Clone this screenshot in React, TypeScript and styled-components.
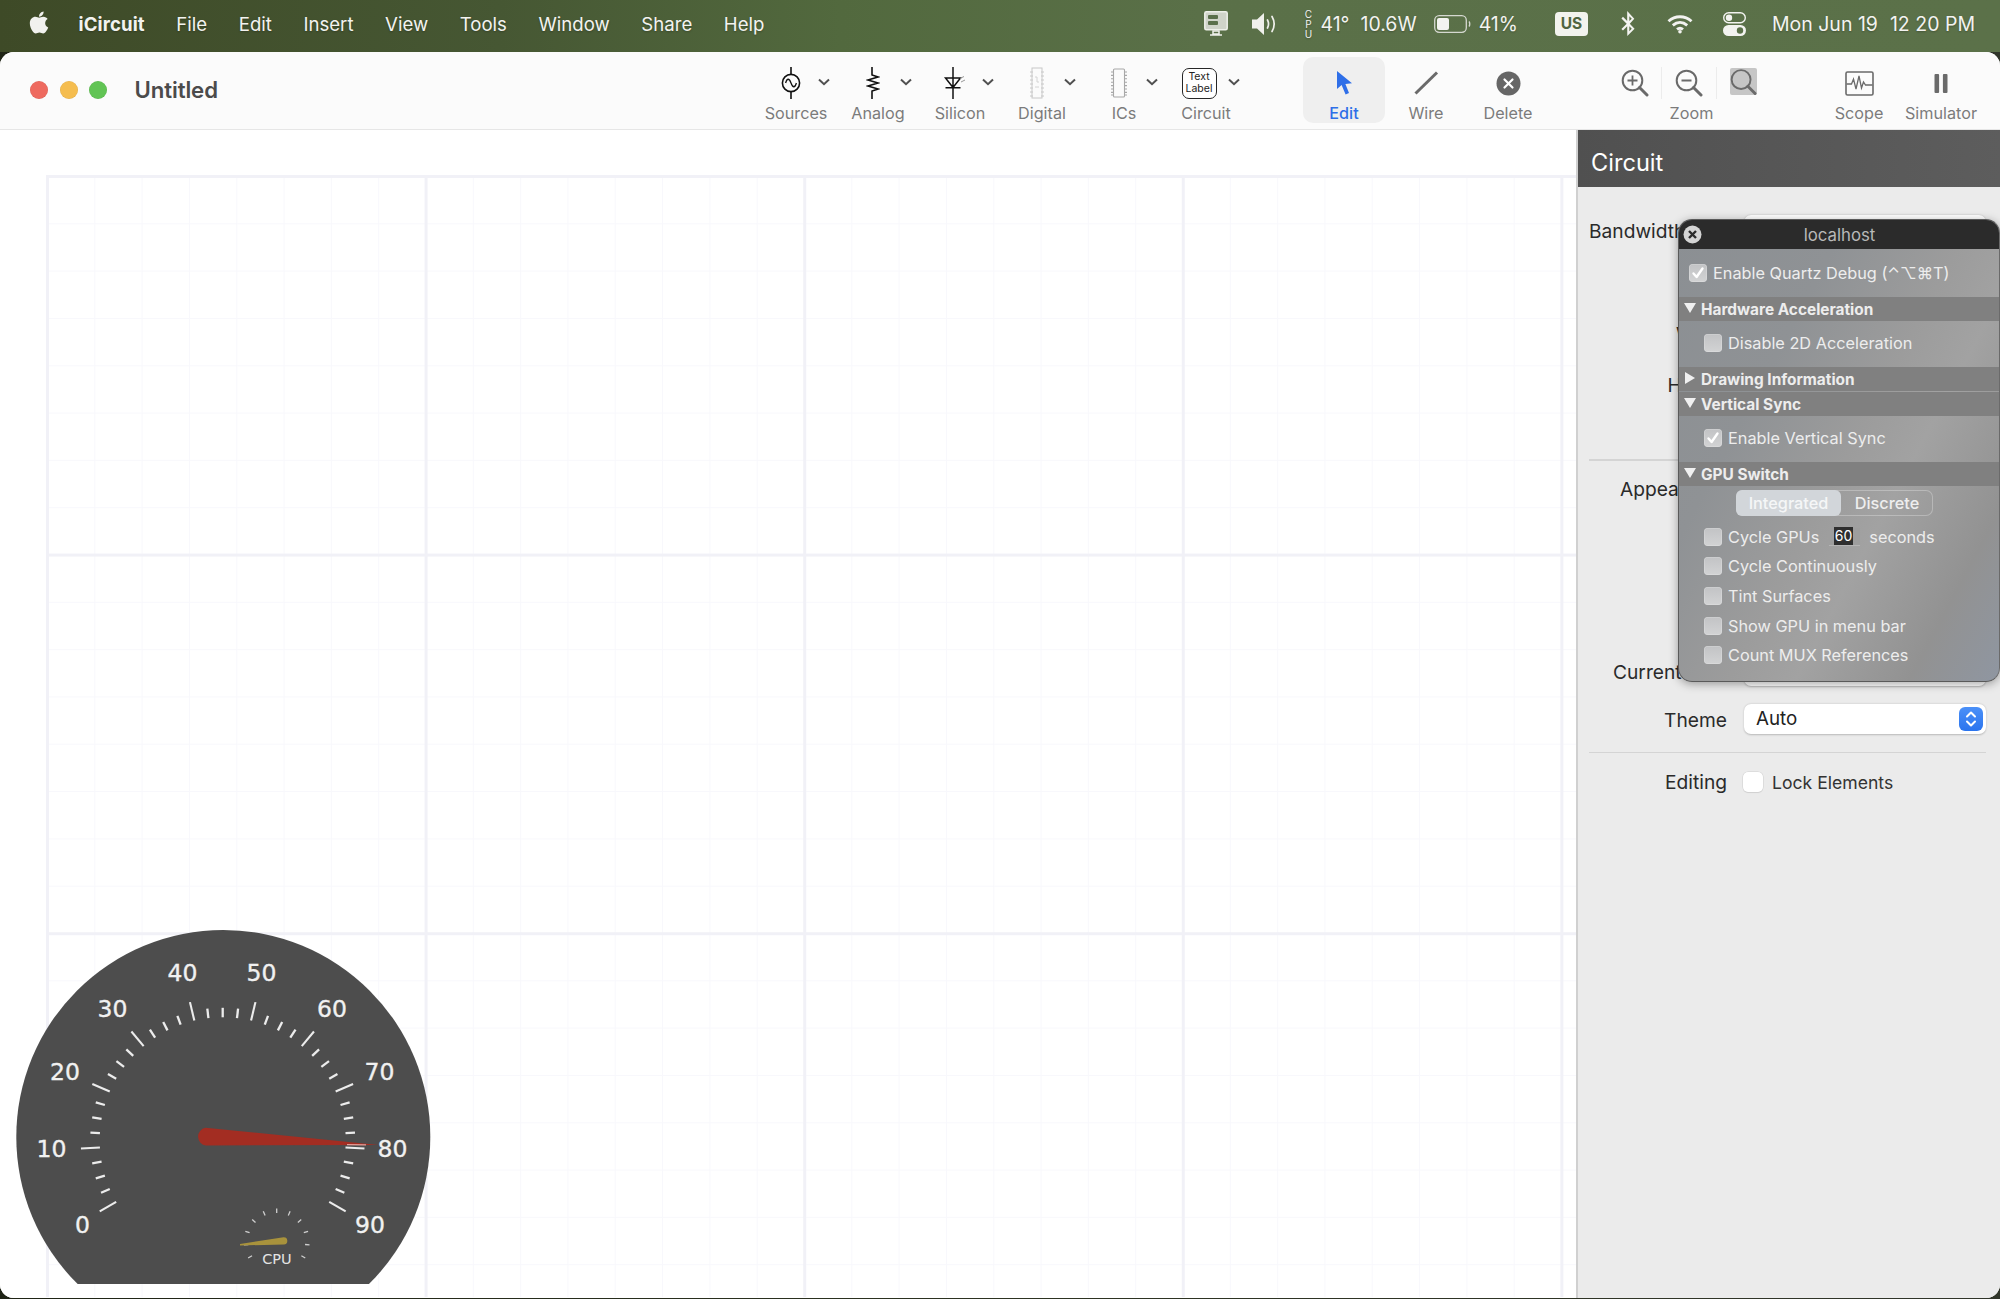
import React from "react";
import styled, { createGlobalStyle } from "styled-components";
import { FaApple, FaBluetoothB } from "react-icons/fa";

const Global = createGlobalStyle`
  html, body { margin: 0; padding: 0; background: #2b3320; }
  * { box-sizing: border-box; }
  body { font-family: Inter, "Liberation Sans", sans-serif; -webkit-font-smoothing: antialiased; }
`;

const Screen = styled.div`
  width: 2000px; height: 1299px; overflow: hidden; display: flex; flex-direction: column;
  background: linear-gradient(90deg, #1f2416 0%, #2d3322 50%, #30352a 100%);
`;
const MenuBar = styled.header`
  height: 52px; flex: none; display: flex; align-items: center; justify-content: space-between;
  padding: 0 25px 5px 29px; color: #f3f3f0;
  background: linear-gradient(90deg, #3e4a27 0%, #465733 25%, #52693e 42%, #5a7048 60%, #5b7149 100%);
`;
const MenuGroup = styled.nav`
  display: flex; align-items: center; gap: 31.6px; font-size: 18.6px; text-shadow: 0 1px 2px rgba(0,0,0,.25);
`;
const AppleMark = styled(FaApple)`
  width: 24px; height: 25px; margin: -3px -4px 0 -2px; color: #f1f1ee;
`;
const AppName = styled.span` font-weight: 700; letter-spacing: .1px; `;
const StatusGroup = styled.div`
  display: flex; align-items: center; font-size: 19.5px; text-shadow: 0 1px 2px rgba(0,0,0,.25);
`;
const StatusItem = styled.span<{ $ml: number }>`
  display: inline-flex; align-items: center; margin-left: ${p => p.$ml}px; white-space: nowrap;
`;
const CpuStack = styled.span`
  display: flex; flex-direction: column; font-size: 10px; line-height: 10px; width: 8px; align-items: center;
`;
const KeyBadge = styled.span`
  width: 33px; height: 24px; border-radius: 4px; background: #f2f3ee; color: #4f6440;
  font-size: 15.5px; font-weight: 700; display: flex; align-items: center; justify-content: center; text-shadow: none;
`;

const Window = styled.main`
  flex: 1; margin-bottom: 1px; display: flex; flex-direction: column; background: #fff;
  border-radius: 14px; overflow: hidden; box-shadow: inset 0 -1px 0 #d5d5d5;
`;
const Toolbar = styled.div`
  height: 78px; flex: none; display: flex; align-items: stretch; background: #fbfbfb;
  border-bottom: 1.5px solid #e6e6e6;
`;
const TitleBlock = styled.div`
  width: 755px; flex: none; padding: 0 0 2px 30px; display: flex; align-items: center;
`;
const Light = styled.span<{ $c: string }>`
  width: 18px; height: 18px; border-radius: 50%; background: ${p => p.$c}; margin-right: 11.5px;
  box-shadow: inset 0 0 0 .5px rgba(0,0,0,.08);
`;
const DocTitle = styled.h1`
  margin: 0 0 0 16px; font-size: 22.2px; font-weight: 600; color: #4b4b4b; letter-spacing: -.1px;
`;
const ToolGroup = styled.button<{ $active?: boolean; $ml?: number }>`
  appearance: none; border: 0; font: inherit; padding: 0; width: 82px; flex: none; margin: 5px 0 6px ${p => p.$ml ?? 0}px;
  border-radius: 10px; background: ${p => (p.$active ? "#efefef" : "transparent")};
  display: flex; flex-direction: column; align-items: center; justify-content: flex-start;
`;
const ToolIconRow = styled.div<{ $chevron?: boolean }>`
  height: 47px; display: flex; align-items: center; justify-content: center; padding-top: 6px;
  padding-left: ${p => (p.$chevron ? 10 : 0)}px; color: #666;
`;
const IconSlot = styled.span`
  width: 36px; height: 32px; display: flex; align-items: center; justify-content: center;
`;
const Chevron = styled.svg`
  width: 12px; height: 8px; margin-left: 9px; margin-top: -3px; fill: none; stroke: #505050; stroke-width: 2;
`;
const ToolLabel = styled.span<{ $active?: boolean }>`
  font-size: 16.2px; line-height: 20px; color: ${p => (p.$active ? "#2f6fe8" : "#7b7b7b")}; font-weight: ${p => (p.$active ? 500 : 400)};
`;
const TextLabelIcon = styled.span`
  width: 35px; height: 31px; flex: none; margin-left: -3px; border: 1.6px solid #262626; border-radius: 7px; display: flex; flex-direction: column;
  align-items: center; justify-content: center; font-size: 10.5px; line-height: 12.5px; color: #222; background: #fff;
`;
const ZoomBlock = styled.div`
  width: 165px; flex: none; margin: 5px 0 6px 60px; display: flex; flex-direction: column; align-items: center;
`;
const ZoomRow = styled.div`
  height: 47px; display: flex; align-items: center; padding-top: 6px; margin-left: -6px;
`;
const ZoomCell = styled.span<{ $divider?: boolean }>`
  width: 54.5px; height: 32px; display: flex; align-items: center; justify-content: center; position: relative;
  border-left: ${p => (p.$divider ? "1px solid #ececec" : "1px solid transparent")};
`;
const ZoomHighlight = styled.span`
  display: flex; background: #c6c6c6; border-radius: 2px; width: 27px; height: 27px; margin-top: -3px;
`;

const Body = styled.div`
  flex: 1; display: flex; min-height: 0;
`;
const Canvas = styled.section`
  flex: 1; min-width: 0; position: relative; background: #fff; overflow: hidden; padding: 45px 0 1px 46px;
`;
const GridSheet = styled.div`
  height: 100%;
  background-image:
    linear-gradient(to right, #f1f1f7 2.5px, transparent 2.5px),
    linear-gradient(to bottom, #f1f1f7 2.5px, transparent 2.5px),
    linear-gradient(to right, #f8f8fc 1.2px, transparent 1.2px),
    linear-gradient(to bottom, #f8f8fc 1.2px, transparent 1.2px);
  background-size: 378.6px 378.6px, 378.6px 378.6px, 47.325px 47.325px, 47.325px 47.325px;
  background-position: 0 0, 0 0, 1px 1px, 1px 1px;
`;
const GaugeSvg = styled.svg`
  position: absolute; left: 0; top: 780px; width: 450px; height: 389px; overflow: hidden;
`;

const Sidebar = styled.aside`
  width: 424px; flex: none; position: relative; background: #ebebeb; border-left: 2px solid #d0d0d0;
  display: flex; flex-direction: column;
`;
const SideHeader = styled.div`
  height: 57px; flex: none; display: flex; align-items: center; padding: 7px 0 0 13px; color: #fff;
  font-size: 23.6px; background: linear-gradient(90deg, #505050, #5d5d5d);
`;
const Form = styled.div`
  display: flex; flex-direction: column; padding: 0 14px 0 11px;
`;
const Row = styled.div<{ $top: number }>`
  display: grid; grid-template-columns: 138px 1fr; column-gap: 17px; align-items: center; height: 34px;
  margin-top: ${p => p.$top}px;
`;
const RowLabel = styled.label<{ $inset?: number }>`
  justify-self: ${p => (p.$inset === undefined ? "end" : "start")};
  padding-left: ${p => p.$inset ?? 0}px;
  white-space: nowrap; font-size: 19.2px; color: #2a2a2a;
`;
const Field = styled.div`
  height: 30px; margin-top: -2px; background: #fff; border-radius: 7px; box-shadow: 0 .5px 2px rgba(0,0,0,.22);
  display: flex; align-items: center; justify-content: space-between; padding: 0 3px 0 12px;
  font-size: 18.8px; color: #222;
`;
const StepperButton = styled.span`
  width: 24px; height: 24px; border-radius: 6px; background: linear-gradient(#4b90f8, #2a74ee); display: flex;
  align-items: center; justify-content: center;
`;
const Divider = styled.hr<{ $top: number }>`
  width: 100%; margin: ${p => p.$top}px 0 0; border: 0; height: 1.5px; background: #d4d4d4;
`;
const CheckRow = styled.div`
  display: flex; align-items: center; gap: 9px; font-size: 17.6px; color: #333; margin-left: -1px;
`;
const WhiteCheck = styled.span`
  width: 20px; height: 20px; background: #fff; border-radius: 5px; box-shadow: 0 0 0 .5px #d0d0d0, 0 1px 1px rgba(0,0,0,.1);
`;

const Hud = styled.div`
  position: absolute; left: 100px; right: 0; top: 89px; height: 463px; border-radius: 14px; overflow: hidden;
  color: #ededed; font-size: 16.3px; border: 1px solid #5a5a5a; border-right-color: #6a6a6a;
  background: linear-gradient(118deg, #8b8f93 0%, #8f9295 30%, #9c9c9c 52%, #a2a2a2 64%, #929292 84%, #8f96a1 100%);
  box-shadow: 0 2px 10px rgba(0,0,0,.35);
`;
const HudTitle = styled.div`
  height: 30px; background: #2b2b2b; display: flex; align-items: center; justify-content: center; color: #b8b8b8;
  position: relative; font-size: 16.8px; padding: 1px 0 0 1px; margin-top: -1px;
`;
const HudClose = styled.span`
  position: absolute; left: 4px; top: 6px; width: 19px; height: 19px; display: flex;
`;
const HudRow = styled.div<{ $indent: number; $h: number; $up?: boolean }>`
  display: flex; align-items: center; gap: 6px; height: ${p => p.$h}px; padding-left: ${p => p.$indent}px;
  padding-bottom: ${p => (p.$up ? 2 : 0)}px; white-space: nowrap;
`;
const HudCheck = styled.span`
  width: 18px; height: 18px; border-radius: 4px; flex: none; background: linear-gradient(#c2c3c5, #d2d3d4);
  box-shadow: inset 0 0 0 .5px rgba(255,255,255,.35); display: flex; align-items: center; justify-content: center;
`;
const HudSection = styled.div<{ $gap?: number }>`
  height: 24px; background: #808080; display: flex; align-items: center; padding-left: 5px; gap: 5px;
  font-weight: 700; font-size: 15.4px; margin-top: ${p => p.$gap ?? 0}px;
`;
const Triangle = styled.svg`
  width: 12px; height: 12px; fill: #f0f0f0; flex: none; margin-top: -2px;
`;
const Segments = styled.div`
  margin: 4px 0 6px 57px; width: 197px; height: 26px; display: flex; border-radius: 7px;
  box-shadow: inset 0 0 0 1px rgba(255,255,255,.28);
`;
const Segment = styled.span<{ $on?: boolean }>`
  display: flex; align-items: center; justify-content: center; border-radius: 6px; font-weight: 500;
  width: ${p => (p.$on ? 105 : 92)}px; background: ${p => (p.$on ? "#d2d6da" : "transparent")};
  color: ${p => (p.$on ? "#f5f6f7" : "#eeeeee")};
`;
const NumberBox = styled.span`
  width: 31px; height: 18px; margin: 0 3px 0 4px; background: #9e9e9e; border-bottom: 1px solid #b5b5b5; padding-left: 5px;
  display: flex; align-items: center;
`;
const Selected = styled.span`
  background: #2f2f2f; color: #fff; font-size: 14px; line-height: 18px; padding: 0 .5px;
`;

const Check = () => (
  <svg width="14" height="14" viewBox="0 0 14 14" fill="none" stroke="#fff" strokeWidth="2.4" strokeLinecap="round" strokeLinejoin="round">
    <path d="M2.5 7.5 5.6 11 11.5 2.5" />
  </svg>
);

const ChevronDown = () => (
  <Chevron viewBox="0 0 12 8"><path d="M1 1.5 6 6.2 11 1.5" /></Chevron>
);

const SourcesIcon = () => (
  <svg width="20" height="32" viewBox="0 0 20 32" fill="none" stroke="#111" strokeWidth="1.6">
    <path d="M10 0v7M10 25v7" />
    <circle cx="10" cy="16" r="8.6" />
    <path d="M4.6 16c1.4-5 3.6-5 5.4 0s4 5 5.4 0" strokeWidth="1.3" />
  </svg>
);
const AnalogIcon = () => (
  <svg width="14" height="32" viewBox="0 0 14 32" fill="none" stroke="#111" strokeWidth="1.6">
    <path d="M6 0v8l6 2-10 3 10 3-10 3 10 3-6 2v9" />
  </svg>
);
const SiliconIcon = () => (
  <svg width="24" height="32" viewBox="0 0 24 32" fill="none" stroke="#111" strokeWidth="1.5">
    <path d="M10 0v32M2.5 11h15L10 20.5zM2.5 20.8h15" />
    <path d="M17 11.5l4-2M18 15l4-2" stroke="#999" strokeWidth="1" />
  </svg>
);
const DigitalIcon = () => (
  <svg width="14" height="32" viewBox="0 0 14 32" fill="none" stroke="#c8c8c8" strokeWidth="1">
    <rect x="2" y="1" width="10" height="30" />
    <path d="M0 5h3M0 9h3M0 13h3M0 17h3M0 21h3M0 25h3M0 29h3M11 5h3M11 9h3M11 13h3M11 17h3M11 21h3M11 25h3M11 29h3" />
    <path d="M5 10h2v5h2M5 20h4" stroke="#d4d4d4" />
  </svg>
);
const IcIcon = () => (
  <svg width="16" height="32" viewBox="0 0 16 32" fill="none" stroke="#a8a8a8" strokeWidth="1.1">
    <rect x="2.5" y="2" width="11" height="28" rx="1" />
    <path d="M0 5h3M0 8.4h3M0 11.8h3M0 15.2h3M0 18.6h3M0 22h3M0 25.4h3M0 28h3M13 5h3M13 8.4h3M13 11.8h3M13 15.2h3M13 18.6h3M13 22h3M13 25.4h3M13 28h3" />
  </svg>
);
const CursorIcon = () => (
  <svg width="18" height="24" viewBox="0 0 18 24"><path d="M2 0v18l4.6-4 4 9.5 3.4-1.4-3.6-9.2 6.6-.6z" fill="#2f6fe8" /></svg>
);
const WireIcon = () => (
  <svg width="26" height="24" viewBox="0 0 26 24" fill="none" stroke="#6a6a6a" strokeWidth="3">
    <path d="M2.5 22.5 24 1.5" />
  </svg>
);
const DeleteIcon = () => (
  <svg width="25" height="25" viewBox="0 0 25 25">
    <circle cx="12.5" cy="12.5" r="12" fill="#666" />
    <path d="M8.5 8.5l8 8M16.5 8.5l-8 8" stroke="#fff" strokeWidth="2.2" strokeLinecap="round" />
  </svg>
);
const ZoomGlass = ({ mark }: { mark?: "plus" | "minus" }) => (
  <svg width="28" height="28" viewBox="0 0 28 28" fill="none" stroke="#6a6a6a" strokeWidth="2">
    <circle cx="11.5" cy="11.5" r="9.8" />
    <path d="M18.5 18.5l7.5 7.5" strokeWidth="3" strokeLinecap="round" />
    {mark === "plus" && <path d="M6.5 11.5h10M11.5 6.5v10" strokeWidth="1.8" />}
    {mark === "minus" && <path d="M6.5 11.5h10" strokeWidth="1.8" />}
  </svg>
);
const ScopeIcon = () => (
  <svg width="29" height="25" viewBox="0 0 29 25" fill="none" stroke="#6a6a6a">
    <rect x="1" y="1" width="27" height="23" rx="1.5" strokeWidth="1.6" />
    <path d="M1.5 13h5l2-5 2.5 10 3-13 2.5 12 2-6 2 3h7" strokeWidth="1.3" />
  </svg>
);
const PauseIcon = () => (
  <svg width="14" height="19" viewBox="0 0 14 19" fill="#6a6a6a">
    <rect x="0.5" y="0" width="4.6" height="19" rx="1" />
    <rect x="8.9" y="0" width="4.6" height="19" rx="1" />
  </svg>
);

const MonitorIcon = () => (
  <svg width="24" height="26" viewBox="0 0 24 26" fill="none">
    <rect x="0.8" y="0.8" width="22.4" height="18" rx="1.5" fill="#cfd3c9" stroke="#eef0ea" strokeWidth="1.5" />
    <rect x="4" y="4" width="10" height="4" rx="1" fill="#5a6f4b" />
    <rect x="4" y="10" width="10" height="4" rx="1" fill="#5a6f4b" />
    <path d="M9 20h6v3H9zM6 24h12" stroke="#eef0ea" strokeWidth="1.5" />
  </svg>
);
const SpeakerIcon = () => (
  <svg width="26" height="24" viewBox="0 0 26 24" fill="none">
    <path d="M1 7.5h5L13 1v22l-7-6.5H1z" fill="#f0f0ec" />
    <path d="M16.5 8c1.3 2.5 1.3 5.5 0 8M21 4.5c2.6 4.5 2.6 10.5 0 15" stroke="#f0f0ec" strokeWidth="1.7" strokeLinecap="round" />
  </svg>
);
const BatteryIcon = () => (
  <svg width="37" height="18" viewBox="0 0 37 18" fill="none">
    <rect x="0.7" y="0.7" width="31.6" height="16.6" rx="4.5" stroke="#d5d8d0" strokeWidth="1.3" />
    <rect x="3" y="3" width="12" height="12" rx="2" fill="#f3f3f0" />
    <path d="M35 6.5c1 1 1 4 0 5" stroke="#d5d8d0" strokeWidth="1.4" />
  </svg>
);
const WifiIcon = () => (
  <svg width="26" height="20" viewBox="0 0 26 20" fill="none" stroke="#f3f3f0" strokeWidth="2.9">
    <path d="M1.5 7.2c6.6-6 16.4-6 23 0M5.8 11.4c4.4-3.8 10-3.8 14.4 0M10 15.4c1.8-1.4 4.2-1.4 6 0" />
    <circle cx="13" cy="17.8" r="1.8" fill="#f3f3f0" stroke="none" />
  </svg>
);
const ControlIcon = () => (
  <svg width="23" height="24" viewBox="0 0 23 24" fill="none">
    <rect x="0.7" y="0.7" width="21.6" height="10" rx="5" stroke="#f3f3f0" strokeWidth="1.4" />
    <circle cx="6" cy="5.7" r="3.2" fill="#f3f3f0" />
    <rect x="0" y="13" width="23" height="11" rx="5.5" fill="#f3f3f0" />
    <circle cx="17" cy="18.5" r="3.2" fill="#5b7149" />
  </svg>
);
const BluetoothIcon = styled(FaBluetoothB)`
  width: 16px; height: 25px; color: #f3f3f0;
`;

const GX = 222.7;
const GY = 230.3;
const pt = (cx: number, cy: number, r: number, deg: number) => {
  const a = (deg * Math.PI) / 180;
  return { x: cx + r * Math.cos(a), y: cy - r * Math.sin(a) };
};
const gaugeLabels: [string, number, number][] = [
  ["0", 82.5, 323], ["10", 51.5, 246.5], ["20", 65, 169.5], ["30", 112.5, 106.5], ["40", 182.5, 70.5],
  ["50", 261.5, 70.5], ["60", 332, 106.5], ["70", 379.5, 169.5], ["80", 392.5, 246.5], ["90", 370, 323],
];

const Gauge = () => (
  <GaugeSvg viewBox="0 0 450 389">
    <defs>
      <clipPath id="gaugeClip"><rect x="0" y="0" width="450" height="374" /></clipPath>
    </defs>
    <circle cx="223.3" cy="227" r="207" fill="#4d4d4d" clipPath="url(#gaugeClip)" />
    {Array.from({ length: 37 }, (_, i) => {
      const deg = 210 - (i * 240) / 36;
      const major = i % 4 === 0;
      const a = pt(GX, GY, 123, deg);
      const b = pt(GX, GY, major ? 142 : 132.5, deg);
      return <line key={i} x1={a.x} y1={a.y} x2={b.x} y2={b.y} stroke="#ececec" strokeWidth={major ? 2.1 : 2.3} />;
    })}
    {gaugeLabels.map(([t, x, y]) => (
      <text key={t} x={x} y={y} fill="#f1f1f1" stroke="#f1f1f1" strokeWidth=".35" fontFamily="DejaVu Sans" fontSize="23.5" textAnchor="middle">{t}</text>
    ))}
    <path d="M205.5 217.7 378.5 235 206 235.5a9 9 0 0 1-.5-17.8z" fill="#a32d22" />
    <line x1="347" y1="234.6" x2="366" y2="234.8" stroke="#e8a09a" strokeWidth="1.2" />
    {Array.from({ length: 11 }, (_, i) => {
      const deg = 210 - i * 24;
      const a = pt(276.7, 331.5, 28.5, deg);
      const b = pt(276.7, 331.5, 33, deg);
      return <line key={i} x1={a.x} y1={a.y} x2={b.x} y2={b.y} stroke="#cfcfcf" strokeWidth="1.3" />;
    })}
    <path d="M240 334 283.5 327.2a3.6 3.6 0 0 1 .4 7.2L240 335.5z" fill="#a8923c" />
    <text x="277" y="354" fill="#e4e4e4" fontFamily="DejaVu Sans" fontSize="14.5" textAnchor="middle">CPU</text>
  </GaugeSvg>
);

const TOOLS: { label: string; icon: React.ReactNode }[] = [
  { label: "Sources", icon: <SourcesIcon /> },
  { label: "Analog", icon: <AnalogIcon /> },
  { label: "Silicon", icon: <SiliconIcon /> },
  { label: "Digital", icon: <DigitalIcon /> },
  { label: "ICs", icon: <IcIcon /> },
  { label: "Circuit", icon: <TextLabelIcon><span>Text</span><span>Label</span></TextLabelIcon> },
];

const HudCheckRow = ({ label, checked, indent = 25, h = 29.6, up, children }: { label: string; checked?: boolean; indent?: number; h?: number; up?: boolean; children?: React.ReactNode }) => (
  <HudRow $indent={indent} $h={h} $up={up}>
    <HudCheck>{checked && <Check />}</HudCheck>
    <span>{label}</span>
    {children}
  </HudRow>
);

const Arrow = ({ open }: { open?: boolean }) => (
  <Triangle viewBox="0 0 12 12">{open ? <path d="M0 1h12L6 11z" /> : <path d="M1 0l10 6-10 6z" />}</Triangle>
);

export default function App() {
  return (
    <Screen>
      <Global />
      <MenuBar>
        <MenuGroup>
          <AppleMark />
          <AppName>iCircuit</AppName>
          {["File", "Edit", "Insert", "View", "Tools", "Window", "Share", "Help"].map(m => <span key={m}>{m}</span>)}
        </MenuGroup>
        <StatusGroup>
          <StatusItem $ml={0}><MonitorIcon /></StatusItem>
          <StatusItem $ml={23}><SpeakerIcon /></StatusItem>
          <StatusItem $ml={27}><CpuStack><span>C</span><span>P</span><span>U</span></CpuStack></StatusItem>
          <StatusItem $ml={8}>41°</StatusItem>
          <StatusItem $ml={11}>10.6W</StatusItem>
          <StatusItem $ml={17}><BatteryIcon /></StatusItem>
          <StatusItem $ml={8}>41%</StatusItem>
          <StatusItem $ml={37}><KeyBadge>US</KeyBadge></StatusItem>
          <StatusItem $ml={32}><BluetoothIcon /></StatusItem>
          <StatusItem $ml={31}><WifiIcon /></StatusItem>
          <StatusItem $ml={30}><ControlIcon /></StatusItem>
          <StatusItem $ml={26}>Mon Jun 19</StatusItem>
          <StatusItem $ml={12}>12 20 PM</StatusItem>
        </StatusGroup>
      </MenuBar>
      <Window>
        <Toolbar>
          <TitleBlock>
            <Light $c="#ee6a5f" />
            <Light $c="#f5bd4f" />
            <Light $c="#61c454" />
            <DocTitle>Untitled</DocTitle>
          </TitleBlock>
          {TOOLS.map(t => (
            <ToolGroup key={t.label}>
              <ToolIconRow $chevron>
                <IconSlot>{t.icon}</IconSlot>
                <ChevronDown />
              </ToolIconRow>
              <ToolLabel>{t.label}</ToolLabel>
            </ToolGroup>
          ))}
          <ToolGroup $active $ml={56}>
            <ToolIconRow><IconSlot><CursorIcon /></IconSlot></ToolIconRow>
            <ToolLabel $active>Edit</ToolLabel>
          </ToolGroup>
          <ToolGroup>
            <ToolIconRow><IconSlot><WireIcon /></IconSlot></ToolIconRow>
            <ToolLabel>Wire</ToolLabel>
          </ToolGroup>
          <ToolGroup>
            <ToolIconRow><IconSlot><DeleteIcon /></IconSlot></ToolIconRow>
            <ToolLabel>Delete</ToolLabel>
          </ToolGroup>
          <ZoomBlock>
            <ZoomRow>
              <ZoomCell><ZoomGlass mark="plus" /></ZoomCell>
              <ZoomCell $divider><ZoomGlass mark="minus" /></ZoomCell>
              <ZoomCell $divider><ZoomHighlight><ZoomGlass /></ZoomHighlight></ZoomCell>
            </ZoomRow>
            <ToolLabel>Zoom</ToolLabel>
          </ZoomBlock>
          <ToolGroup $ml={44}>
            <ToolIconRow><IconSlot><ScopeIcon /></IconSlot></ToolIconRow>
            <ToolLabel>Scope</ToolLabel>
          </ToolGroup>
          <ToolGroup>
            <ToolIconRow><IconSlot><PauseIcon /></IconSlot></ToolIconRow>
            <ToolLabel>Simulator</ToolLabel>
          </ToolGroup>
        </Toolbar>
        <Body>
          <Canvas>
            <GridSheet />
            <Gauge />
          </Canvas>
          <Sidebar>
            <SideHeader>Circuit</SideHeader>
            <Form>
              <Row $top={27}><RowLabel $inset={0}>Bandwidth</RowLabel><Field /></Row>
              <Row $top={69}><RowLabel $inset={87}>Width</RowLabel></Row>
              <Row $top={17}><RowLabel>Height</RowLabel></Row>
              <Divider $top={57} />
              <Row $top={11}><RowLabel $inset={31}>Appearance</RowLabel></Row>
              <Row $top={149}><RowLabel $inset={24}>Current</RowLabel><Field /></Row>
              <Row $top={14}>
                <RowLabel>Theme</RowLabel>
                <Field>
                  <span>Auto</span>
                  <StepperButton>
                    <svg width="14" height="18" viewBox="0 0 14 18" fill="none" stroke="#fff" strokeWidth="2" strokeLinecap="round" strokeLinejoin="round">
                      <path d="M3 6.5 7 2.5l4 4M3 11.5l4 4 4-4" />
                    </svg>
                  </StepperButton>
                </Field>
              </Row>
              <Divider $top={15} />
              <Row $top={12}>
                <RowLabel>Editing</RowLabel>
                <CheckRow><WhiteCheck /><span>Lock Elements</span></CheckRow>
              </Row>
            </Form>
            <Hud>
              <HudTitle>
                <HudClose>
                  <svg width="19" height="19" viewBox="0 0 19 19">
                    <circle cx="9.5" cy="9.5" r="9" fill="#d4d4d4" />
                    <path d="M6 6l7 7M13 6l-7 7" stroke="#2b2b2b" strokeWidth="2.4" />
                  </svg>
                </HudClose>
                localhost
              </HudTitle>
              <HudCheckRow label="Enable Quartz Debug (⌃⌥⌘T)" checked indent={10} h={48} />
              <HudSection><Arrow open />Hardware Acceleration</HudSection>
              <HudCheckRow label="Disable 2D Acceleration" h={46} up />
              <HudSection><Arrow />Drawing Information</HudSection>
              <HudSection $gap={1}><Arrow open />Vertical Sync</HudSection>
              <HudCheckRow label="Enable Vertical Sync" checked h={46} up />
              <HudSection><Arrow open />GPU Switch</HudSection>
              <Segments>
                <Segment $on>Integrated</Segment>
                <Segment>Discrete</Segment>
              </Segments>
              <HudCheckRow label="Cycle GPUs">
                <NumberBox><Selected>60</Selected></NumberBox>
                <span>seconds</span>
              </HudCheckRow>
              <HudCheckRow label="Cycle Continuously" />
              <HudCheckRow label="Tint Surfaces" />
              <HudCheckRow label="Show GPU in menu bar" />
              <HudCheckRow label="Count MUX References" />
            </Hud>
          </Sidebar>
        </Body>
      </Window>
    </Screen>
  );
}
